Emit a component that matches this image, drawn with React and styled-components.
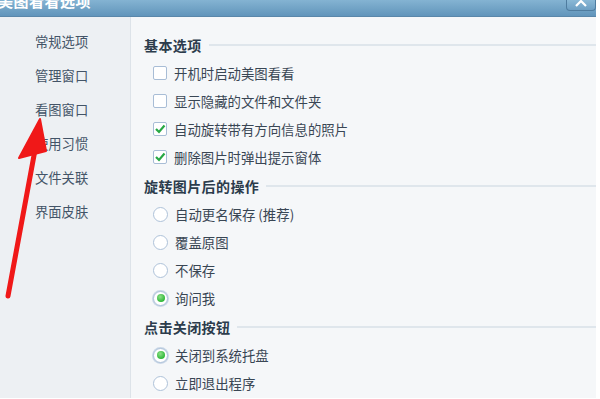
import styled, { createGlobalStyle } from "styled-components";

const GlobalStyle = createGlobalStyle`
  html, body {
    margin: 0;
    padding: 0;
    background: #ffffff;
    font-family: "Noto Sans CJK SC", "Noto Sans", sans-serif;
  }
`;

const sideItems = ["常规选项", "管理窗口", "看图窗口", "使用习惯", "文件关联", "界面皮肤"];

const sections = [
    {
        title: "基本选项",
        type: "check",
        items: [
            { label: "开机时启动美图看看", on: false },
            { label: "显示隐藏的文件和文件夹", on: false },
            { label: "自动旋转带有方向信息的照片", on: true },
            { label: "删除图片时弹出提示窗体", on: true },
        ],
    },
    {
        title: "旋转图片后的操作",
        type: "radio",
        items: [
            { label: "自动更名保存 (推荐)", on: false },
            { label: "覆盖原图", on: false },
            { label: "不保存", on: false },
            { label: "询问我", on: true },
        ],
    },
    {
        title: "点击关闭按钮",
        type: "radio",
        items: [
            { label: "关闭到系统托盘", on: true },
            { label: "立即退出程序", on: false },
        ],
    },
];

export default function App() {
    return (
        <Page>
            <GlobalStyle />
            <Window>
                <TitleBar>
                    <Title>美图看看选项</Title>
                    <CloseButton>
                        <svg width="14" height="8" viewBox="0 0 14 8">
                            <polyline points="2,7 7,2 12,7" fill="none" stroke="#ffffff" strokeWidth="2.2" />
                        </svg>
                    </CloseButton>
                </TitleBar>
                <Body>
                    <Sidebar>
                        {sideItems.map(item => <SideItem key={item}>{item}</SideItem>)}
                    </Sidebar>
                    <Panel>
                        {sections.map(section =>
                            <Section key={section.title}>
                                <Header>
                                    <HeaderText>{section.title}</HeaderText>
                                    <HeaderLine />
                                </Header>
                                {section.items.map(item =>
                                    <Row key={item.label}>
                                        {section.type === "check"
                                            ? <CheckBox>{item.on && <CheckMark />}</CheckBox>
                                            : <Radio $on={item.on}>{item.on && <Dot />}</Radio>}
                                        <Label>{item.label}</Label>
                                    </Row>)}
                            </Section>)}
                    </Panel>
                </Body>
            </Window>
            <Arrow width="60" height="310" viewBox="0 0 60 310">
                <line x1="8" y1="296" x2="35" y2="150" stroke="#f01818" strokeWidth="5" strokeLinecap="round" />
                <polygon points="40,119 19,158 46,151" fill="#f01818" stroke="#f01818" strokeWidth="2" strokeLinejoin="round" />
            </Arrow>
        </Page>
    )
}

function CheckMark() {
    return (
        <svg width="12" height="12" viewBox="0 0 12 12">
            <polyline points="2,6 5,9 10.5,2.5" fill="none" stroke="#27a844" strokeWidth="2.2" />
        </svg>
    )
}

const Page = styled.div`
position: relative;
width: 600px;
height: 399px;
overflow: hidden;
`

const Window = styled.div`
width: 596px;
height: 397px;
display: flex;
flex-direction: column;
`

const TitleBar = styled.div`
height: 16px;
flex-shrink: 0;
background: linear-gradient(#84b3d2, #6195bb);
border-bottom: 1px solid #5a87aa;
display: flex;
justify-content: space-between;
align-items: flex-start;
overflow: hidden;
`

const Title = styled.div`
margin-top: -8px;
margin-left: -2px;
font-size: 15px;
line-height: 18px;
font-weight: bold;
letter-spacing: 0.5px;
color: #ffffff;
`

const CloseButton = styled.div`
width: 28px;
height: 11px;
margin-top: -1px;
border: 1px solid #4f7c9f;
border-top: none;
border-radius: 0 0 4px 4px;
background: linear-gradient(#8dbbd8, #6d9fc3);
display: flex;
justify-content: center;
align-items: flex-start;
`

const Body = styled.div`
flex: 1;
display: flex;
`

const Sidebar = styled.div`
width: 130px;
flex-shrink: 0;
background: #edf0f3;
border-right: 1px solid #dde3e9;
padding-top: 8px;
`

const SideItem = styled.div`
height: 34px;
line-height: 34px;
padding-left: 35px;
font-size: 13.3px;
color: #435467;
`

const Panel = styled.div`
flex: 1;
background: #f5f7f9;
padding: 14px 0 0 13px;
`

const Section = styled.div`
margin-bottom: 1px;
`

const Header = styled.div`
height: 28px;
display: flex;
align-items: center;
gap: 7px;
`

const HeaderText = styled.div`
font-size: 14px;
font-weight: bold;
letter-spacing: 0.4px;
color: #2c3c4c;
`

const HeaderLine = styled.div`
flex: 1;
height: 2px;
background: #dfe6ec;
`

const Row = styled.div`
height: 28px;
display: flex;
align-items: center;
padding-left: 9px;
gap: 7px;
`

const CheckBox = styled.div`
width: 12px;
height: 12px;
border: 1px solid #a8bdd6;
border-radius: 2px;
background: #ffffff;
display: flex;
align-items: center;
justify-content: center;
`

const Radio = styled.div`
width: 13px;
height: 13px;
border: 1px solid #aec2d9;
border-radius: 50%;
background: #ffffff;
display: flex;
align-items: center;
justify-content: center;
box-shadow: ${props => props.$on ? "0 0 0 1px #c9d7e7" : "none"};
`

const Dot = styled.div`
width: 8px;
height: 8px;
border-radius: 50%;
background: radial-gradient(circle at 40% 35%, #8fe08a, #2fb83a 70%);
`

const Label = styled.div`
font-size: 13.4px;
color: #394654;
white-space: nowrap;
`

const Arrow = styled.svg`
position: absolute;
left: 0;
top: 0;
`
